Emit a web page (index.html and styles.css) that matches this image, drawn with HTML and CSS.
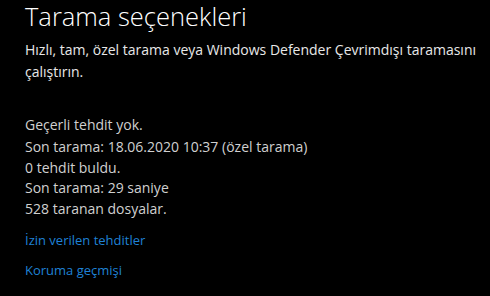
FILE: index.html
```html
<!DOCTYPE html>
<html lang="tr">
<head>
    <meta charset="UTF-8">
    <meta name="viewport" content="width=device-width, initial-scale=1.0">
    <title>Tarama seçenekleri</title>
    <link rel="stylesheet" href="styles.css">
</head>
<body>
    <div class="page">
        <h1 class="title">Tarama seçenekleri</h1>
        <p class="intro">Hızlı, tam, özel tarama veya Windows Defender Çevrimdışı taramasını çalıştırın.</p>

        <div class="status">
            <p class="status-head">Geçerli tehdit yok.</p>
            <p class="status-line">Son tarama: 18.06.2020 10:37 (özel tarama)</p>
            <p class="status-line">0 tehdit buldu.</p>
            <p class="status-line">Son tarama: 29 saniye</p>
            <p class="status-line">528 taranan dosyalar.</p>
        </div>

        <div class="links">
            <a class="link" href="#">İzin verilen tehditler</a>
            <a class="link" href="#">Koruma geçmişi</a>
        </div>
    </div>
</body>
</html>
```

FILE: styles.css
```css
body {
    margin: 0;
    padding: 0;
    background: #000;
    color: #fff;
    font-family: 'Open Sans', 'Noto Sans', sans-serif;
    overflow: hidden;
}

.page {
    padding: 0 0 0 25px;
    width: 460px;
}

.title {
    margin: 0;
    font-size: 25.5px;
    font-weight: 300;
    line-height: 32px;
}

.intro {
    margin: 7px 0 0;
    font-size: 14px;
    line-height: 22px;
    color: #e8e8e8;
}

.status {
    margin-top: 32px;
}

.status p {
    margin: 0;
    font-size: 14px;
    color: #d0d0d0;
}

.status-head {
    line-height: 20px;
    margin-bottom: 2px !important;
}

.status-line {
    line-height: 20.5px;
}

.links {
    display: flex;
    flex-direction: column;
    align-items: flex-start;
    gap: 9px;
    margin-top: 11px;
}

.link {
    font-size: 13px;
    line-height: 21px;
    color: #1f82d6;
    text-decoration: none;
}
```
